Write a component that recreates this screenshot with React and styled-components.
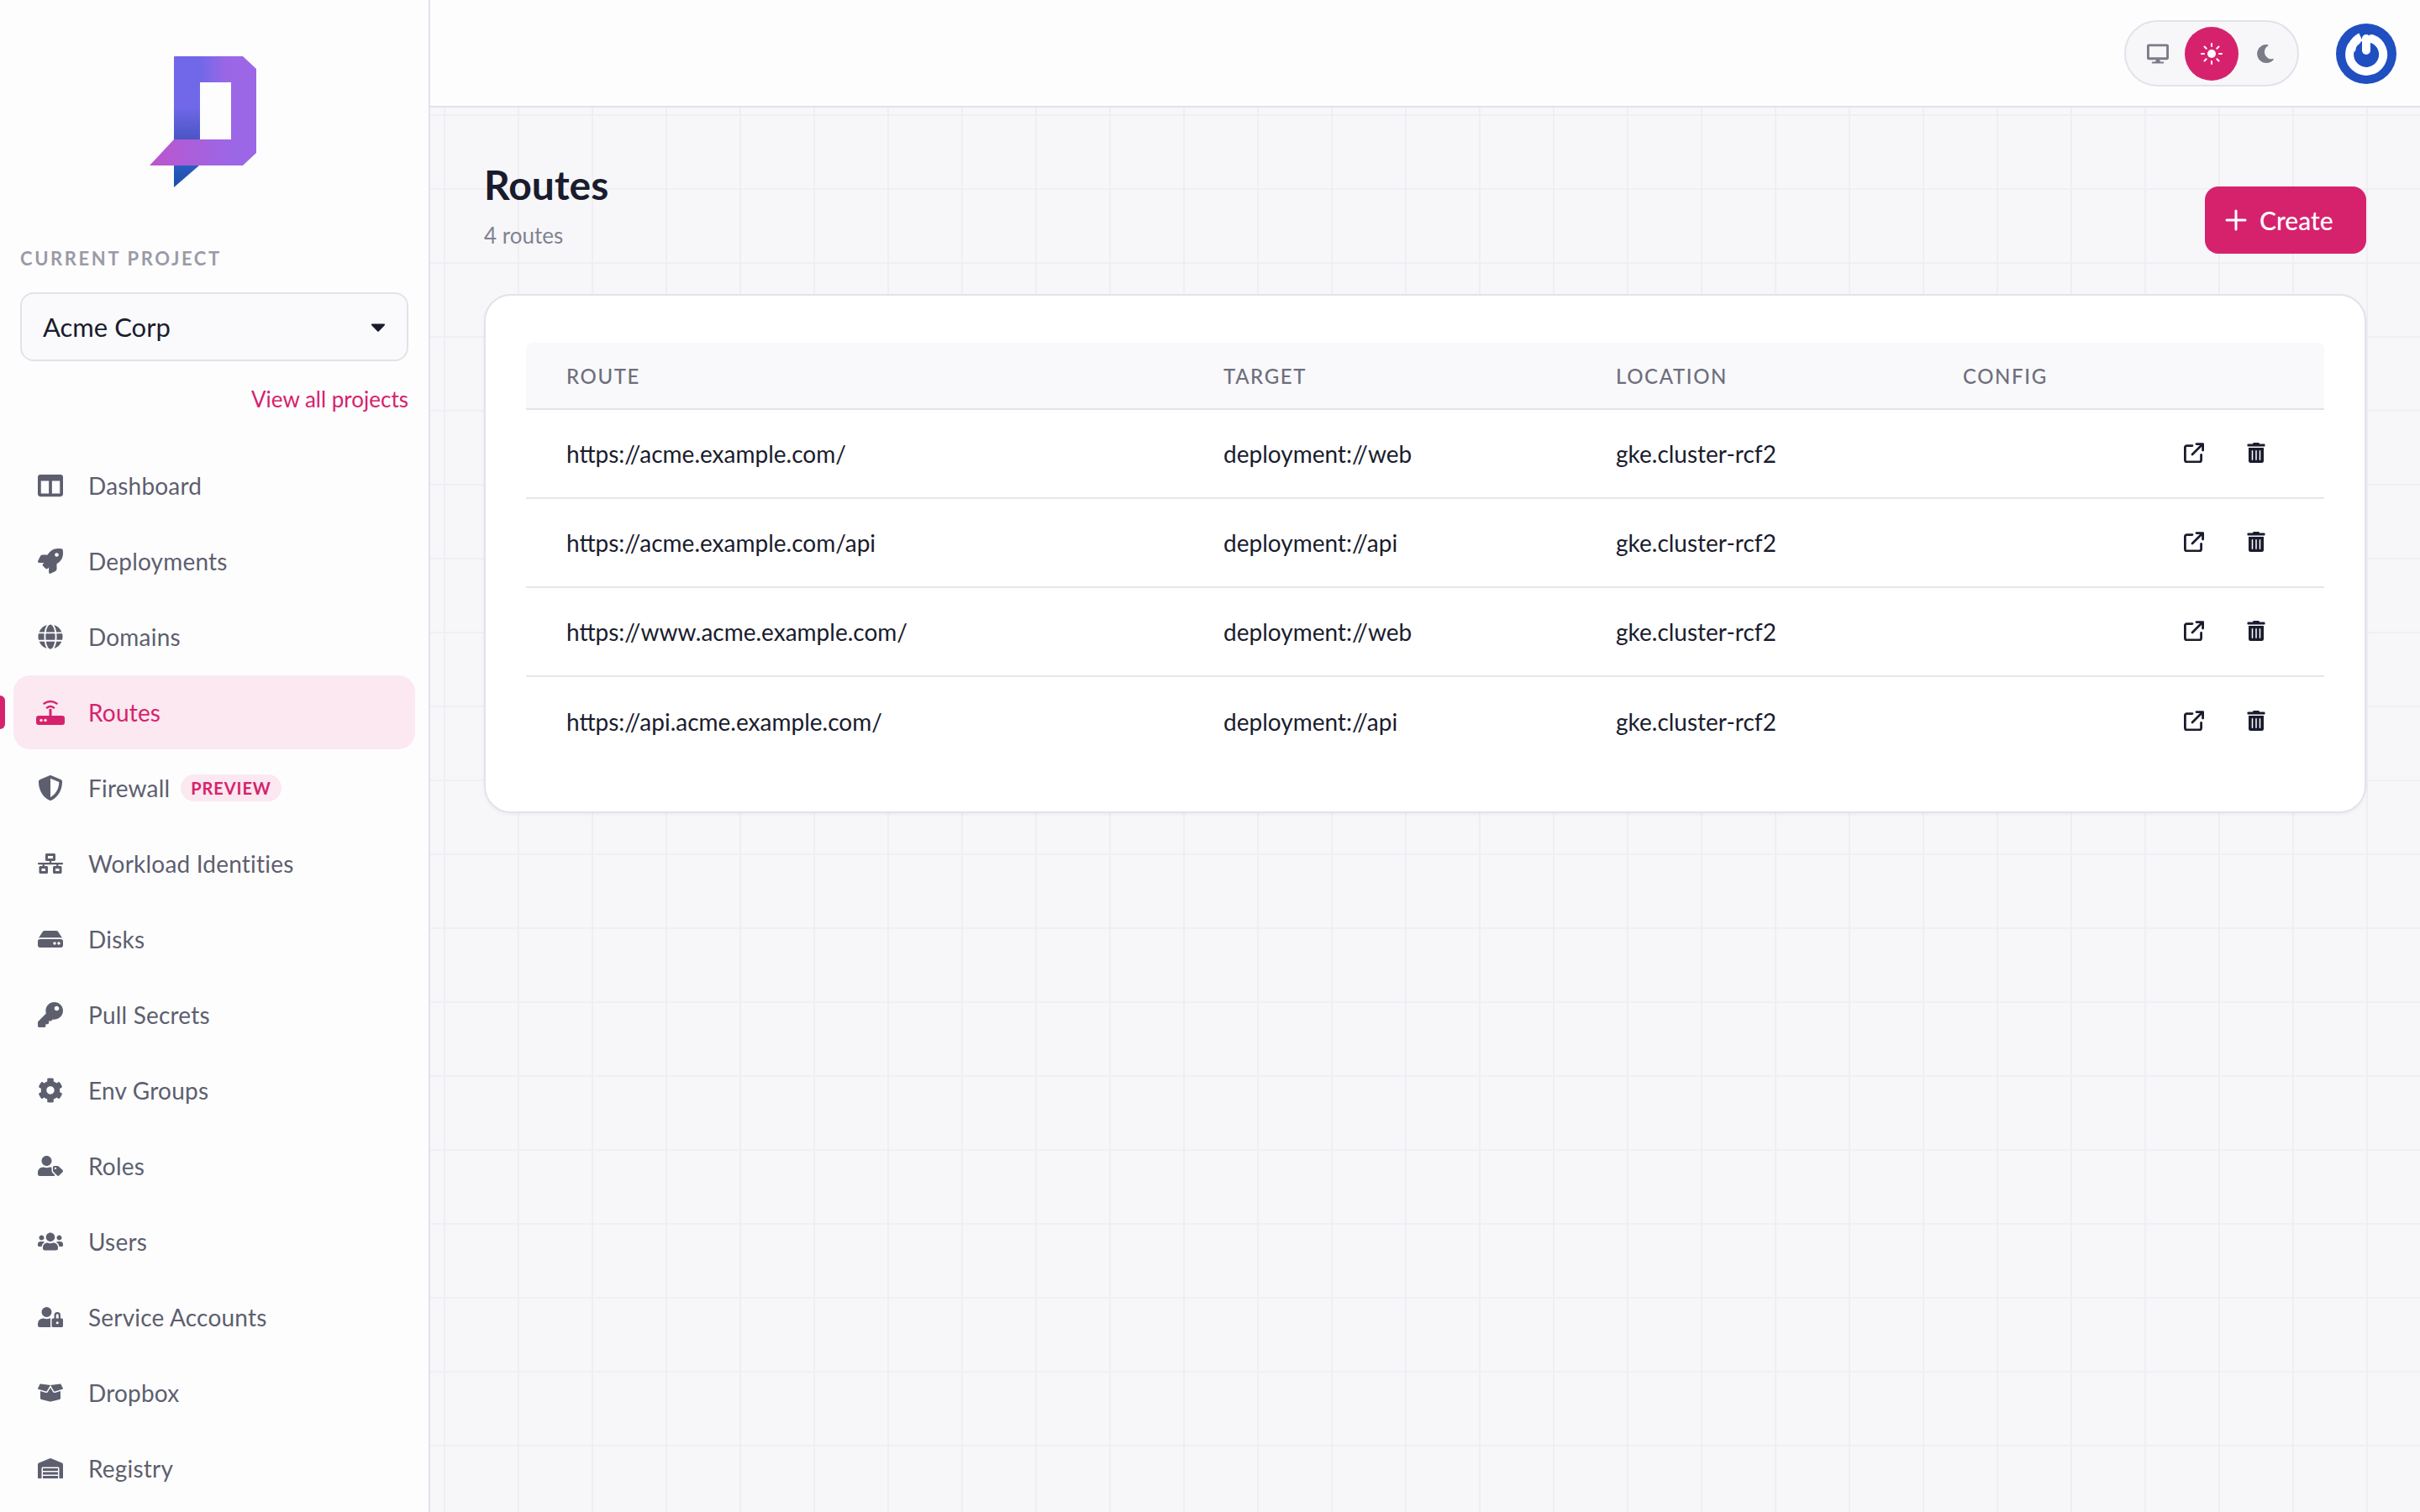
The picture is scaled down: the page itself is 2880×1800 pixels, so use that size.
import React from "react";
import styled, { createGlobalStyle } from "styled-components";
import {
  FaColumns, FaRocket, FaGlobe, FaShieldAlt, FaNetworkWired, FaHdd, FaKey, FaCog,
  FaUserTag, FaUsers, FaUserLock, FaBoxOpen, FaWarehouse, FaTrashAlt, FaDesktop, FaMoon, FaCaretDown,
} from "react-icons/fa";

const PINK = "#d6226d";
const FONT = `"Lato", "Noto Sans", sans-serif`;

const Global = createGlobalStyle`
  * { box-sizing: border-box; }
  html, body { margin: 0; height: 100%; }
  body { font-family: ${FONT}; background: #f7f7fa; overflow: hidden; }
`;

const Shell = styled.div`
  display: grid;
  grid-template-columns: 512px 1fr;
  height: 1800px;
  overflow: hidden;
`;

const Sidebar = styled.aside`
  background: #fdfdfe;
  border-right: 2px solid #e2e2ea;
  display: flex;
  flex-direction: column;
  overflow: hidden;
`;

const LogoWrap = styled.div`
  padding: 67px 0 0 178px;
  line-height: 0;
`;

const ProjectBlock = styled.div`
  display: flex;
  flex-direction: column;
  padding: 71px 24px 0;
`;

const ProjectLabel = styled.div`
  font-size: 22px;
  line-height: 28px;
  font-weight: 700;
  letter-spacing: 2.6px;
  color: #9a9ba6;
  text-transform: uppercase;
`;

const ProjectSelect = styled.div`
  margin-top: 26px;
  height: 82px;
  width: 462px;
  border: 2px solid #e2e2ea;
  border-radius: 16px;
  background: #fafafc;
  display: flex;
  align-items: center;
  justify-content: space-between;
  padding: 0 20px 0 25px;
  font-size: 31px;
  color: #1a1c2e;
`;

const ProjectLink = styled.a`
  margin-top: 27px;
  align-self: flex-end;
  font-size: 26px;
  line-height: 36px;
  color: ${PINK};
`;

const Nav = styled.nav`
  margin: 41px 16px 0;
  display: flex;
  flex-direction: column;
  gap: 2px;
`;

const NavItem = styled.a`
  position: relative;
  flex: none;
  height: 88px;
  display: flex;
  align-items: center;
  padding-left: 24px;
  border-radius: 20px;
  font-size: 28px;
  letter-spacing: 0.2px;
  color: ${(p) => (p.$active ? PINK : "#5d5f6e")};
  background: ${(p) => (p.$active ? "#fbe8f0" : "transparent")};
`;

const ActiveBar = styled.span`
  position: absolute;
  left: -16px;
  top: 24px;
  width: 6px;
  height: 40px;
  border-radius: 0 6px 6px 0;
  background: ${PINK};
`;

const NavIcon = styled.span`
  width: 40px;
  height: 30px;
  flex: none;
  margin-right: 25px;
  display: flex;
  align-items: center;
  justify-content: center;
  font-size: 30px;
`;

const Badge = styled.span`
  margin-left: 13px;
  height: 32px;
  padding: 0 12px;
  border-radius: 16px;
  background: #fbe8f0;
  color: ${PINK};
  font-size: 20px;
  font-weight: 700;
  letter-spacing: 0.9px;
  display: flex;
  align-items: center;
`;

const Main = styled.main`
  min-width: 0;
  display: flex;
  flex-direction: column;
  background-color: #f7f7fa;
  background-image:
    linear-gradient(to right, #eeeff3 2px, transparent 2px),
    linear-gradient(to bottom, #f0f0f4 2px, transparent 2px);
  background-size: 88px 88px;
  background-position: 16px 48px;
`;

const TopBar = styled.header`
  flex: none;
  height: 128px;
  background: #fdfdfe;
  border-bottom: 2px solid #e2e2ea;
  display: flex;
  align-items: flex-start;
  justify-content: flex-end;
  padding: 24px 28px 0 0;
`;

const ThemePill = styled.div`
  width: 208px;
  height: 79px;
  border: 2px solid #e2e2ea;
  border-radius: 40px;
  background: #f7f7fa;
  display: flex;
  align-items: center;
  padding-left: 6px;
`;

const ThemeButton = styled.span`
  width: 64px;
  height: 64px;
  flex: none;
  border-radius: 50%;
  display: flex;
  align-items: center;
  justify-content: center;
  font-size: ${(p) => p.$size || 26}px;
  color: ${(p) => (p.$active ? "#fff" : "#7b7c88")};
  background: ${(p) => (p.$active ? PINK : "transparent")};
`;

const Avatar = styled.span`
  margin: 4px 0 0 44px;
  line-height: 0;
`;

const Content = styled.div`
  padding: 62px 64px 0;
`;

const PageHead = styled.div`
  display: flex;
  justify-content: space-between;
  align-items: flex-start;
  height: 160px;
`;

const Title = styled.h1`
  margin: 0;
  font-size: 48px;
  line-height: 60px;
  font-weight: 700;
  color: #1a1c2e;
`;

const Subtitle = styled.div`
  margin-top: 10px;
  font-size: 26px;
  line-height: 40px;
  color: #82838f;
`;

const CreateButton = styled.button`
  margin-top: 32px;
  width: 192px;
  height: 80px;
  border: 0;
  border-radius: 16px;
  background: ${PINK};
  color: #fff;
  font-family: ${FONT};
  font-size: 30px;
  font-weight: 500;
  display: flex;
  align-items: center;
  gap: 15px;
  padding: 0 0 0 24px;
`;

const Card = styled.section`
  height: 618px;
  background: #fff;
  border: 2px solid #e2e2ea;
  border-radius: 32px;
  padding: 56px 48px;
  box-shadow: 0 2px 4px rgba(30, 30, 60, 0.04);
`;

const Table = styled.table`
  width: 100%;
  table-layout: fixed;
  border-collapse: separate;
  border-spacing: 0;
`;

const Th = styled.th`
  height: 80px;
  width: ${(p) => p.$w || "auto"};
  padding: 0 0 0 48px;
  text-align: left;
  background: #f9f9fb;
  border-bottom: 2px solid #e2e2ea;
  font-size: 24px;
  font-weight: 500;
  letter-spacing: 1.6px;
  color: #6e6f7c;
  text-transform: uppercase;
  &:first-child { border-top-left-radius: 8px; }
  &:last-child { border-top-right-radius: 8px; }
`;

const Row = styled.tr`
  &:not(:last-child) td { border-bottom: 2px solid #e6e6ec; }
`;

const Td = styled.td`
  height: 106px;
  padding: 0 0 0 48px;
  font-size: 28px;
  color: #1a1c2e;
  vertical-align: middle;
`;

const Actions = styled.div`
  display: flex;
  align-items: center;
  justify-content: flex-end;
  gap: 50px;
  padding-right: 69px;
  margin-top: -2px;
  color: #1a1c2e;
  font-size: 24px;
  line-height: 0;
`;

const Logo = () => (
  <svg width="127" height="156" viewBox="0 0 127 156">
    <defs>
      <linearGradient id="lgMain" x1="0" y1="0" x2="1" y2="0">
        <stop offset="0.3" stopColor="#7068e8" />
        <stop offset="0.65" stopColor="#9c67e6" />
      </linearGradient>
      <linearGradient id="lgBand" x1="0" y1="0" x2="1" y2="0">
        <stop offset="0" stopColor="#bb55cc" />
        <stop offset="0.75" stopColor="#9c67e6" />
      </linearGradient>
      <linearGradient id="lgShade" x1="0" y1="0" x2="0" y2="1">
        <stop offset="0" stopColor="#4a55c4" stopOpacity="0" />
        <stop offset="1" stopColor="#4a55c4" />
      </linearGradient>
      <linearGradient id="lgTail" x1="0" y1="0" x2="0" y2="1">
        <stop offset="0" stopColor="#2a5cc2" />
        <stop offset="1" stopColor="#1c4ea6" />
      </linearGradient>
    </defs>
    <path d="M29 1a1 1 0 0 1 1-1h81l16 15v84H29z" fill="url(#lgMain)" />
    <rect x="29" y="60" width="31" height="39" fill="url(#lgShade)" />
    <path d="M29 130h30L29 156z" fill="url(#lgTail)" />
    <path d="M0 130 29 99h98v16l-16 15z" fill="url(#lgBand)" />
    <rect x="60" y="31" width="37" height="68" fill="#fdfdfe" />
  </svg>
);

const RouterIcon = () => (
  <svg width="34" height="30" viewBox="0 0 34 30" fill="none">
    <path d="M9.5 4.5Q17-.5 24.5 4.5M13 9.5Q17 6.5 21 9.5" stroke="currentColor" strokeWidth="2.4" strokeLinecap="round" />
    <rect x="15.5" y="11" width="3" height="9" fill="currentColor" />
    <rect y="19" width="34" height="11" rx="3" fill="currentColor" />
    <circle cx="6" cy="24.5" r="1.7" fill="#fbe8f0" />
    <circle cx="11" cy="24.5" r="1.7" fill="#fbe8f0" />
  </svg>
);

const SunIcon = () => (
  <svg width="26" height="26" viewBox="0 0 26 26" fill="none" stroke="#fff" strokeWidth="2" strokeLinecap="round">
    <circle cx="13" cy="13" r="5" fill="#fff" stroke="none" />
    <path d="M13 1v3M13 22v3M1 13h3M22 13h3M4.5 4.5l2.2 2.2M19.3 19.3l2.2 2.2M4.5 21.5l2.2-2.2M19.3 6.7l2.2-2.2" />
  </svg>
);

const PowerAvatar = () => (
  <svg width="72" height="72" viewBox="0 0 72 72" fill="none">
    <circle cx="36" cy="36" r="36" fill="#1f4fc1" />
    <path d="M27 19a20 20 0 1 0 18 0" stroke="#fff" strokeWidth="10" strokeLinecap="round" transform="rotate(-8 36 36)" />
    <path d="M36 18v14" stroke="#fff" strokeWidth="10" strokeLinecap="round" />
    <path d="M29.5 16A20.5 20.5 0 0 0 18 33" stroke="#fff" strokeWidth="10" />
  </svg>
);

const ExternalIcon = () => (
  <svg width="24" height="24" viewBox="0 0 24 24" fill="none" stroke="currentColor" strokeWidth="2.8" strokeLinecap="round" strokeLinejoin="round">
    <path d="M10 3.6H3.4a2 2 0 0 0-2 2v15.2a2 2 0 0 0 2 2h15.2a2 2 0 0 0 2-2V14.4" />
    <path d="M10 14 21 3M15 1.6h7.6v7.4" />
  </svg>
);

const items = [
  ["Dashboard", <FaColumns />],
  ["Deployments", <FaRocket />],
  ["Domains", <FaGlobe />],
  ["Routes", <RouterIcon />, true],
  ["Firewall", <FaShieldAlt />, false, "PREVIEW"],
  ["Workload Identities", <FaNetworkWired />],
  ["Disks", <FaHdd />],
  ["Pull Secrets", <FaKey />],
  ["Env Groups", <FaCog />],
  ["Roles", <FaUserTag />],
  ["Users", <FaUsers />],
  ["Service Accounts", <FaUserLock />],
  ["Dropbox", <FaBoxOpen />],
  ["Registry", <FaWarehouse />],
];

const routes = [
  ["https://acme.example.com/", "deployment://web"],
  ["https://acme.example.com/api", "deployment://api"],
  ["https://www.acme.example.com/", "deployment://web"],
  ["https://api.acme.example.com/", "deployment://api"],
];

export default function App() {
  return (
    <>
      <Global />
      <Shell>
        <Sidebar>
          <LogoWrap><Logo /></LogoWrap>
          <ProjectBlock>
            <ProjectLabel>Current Project</ProjectLabel>
            <ProjectSelect>
              Acme Corp
              <FaCaretDown size={28} />
            </ProjectSelect>
            <ProjectLink>View all projects</ProjectLink>
          </ProjectBlock>
          <Nav>
            {items.map(([label, icon, active, badge]) => (
              <NavItem key={label} $active={active}>
                {active && <ActiveBar />}
                <NavIcon>{icon}</NavIcon>
                {label}
                {badge && <Badge>{badge}</Badge>}
              </NavItem>
            ))}
          </Nav>
        </Sidebar>
        <Main>
          <TopBar>
            <ThemePill>
              <ThemeButton><FaDesktop /></ThemeButton>
              <ThemeButton $active><SunIcon /></ThemeButton>
              <ThemeButton $size={22}><FaMoon /></ThemeButton>
            </ThemePill>
            <Avatar><PowerAvatar /></Avatar>
          </TopBar>
          <Content>
            <PageHead>
              <div>
                <Title>Routes</Title>
                <Subtitle>4 routes</Subtitle>
              </div>
              <CreateButton>
                <svg width="26" height="26" viewBox="0 0 26 26" stroke="#fff" strokeWidth="3" strokeLinecap="round"><path d="M13 2v22M2 13h22" /></svg>
                Create
              </CreateButton>
            </PageHead>
            <Card>
              <Table>
                <thead>
                  <tr>
                    <Th $w="782px">Route</Th>
                    <Th $w="467px">Target</Th>
                    <Th $w="413px">Location</Th>
                    <Th>Config</Th>
                  </tr>
                </thead>
                <tbody>
                  {routes.map(([route, target]) => (
                    <Row key={route}>
                      <Td>{route}</Td>
                      <Td>{target}</Td>
                      <Td>gke.cluster-rcf2</Td>
                      <Td>
                        <Actions>
                          <ExternalIcon />
                          <FaTrashAlt />
                        </Actions>
                      </Td>
                    </Row>
                  ))}
                </tbody>
              </Table>
            </Card>
          </Content>
        </Main>
      </Shell>
    </>
  );
}
